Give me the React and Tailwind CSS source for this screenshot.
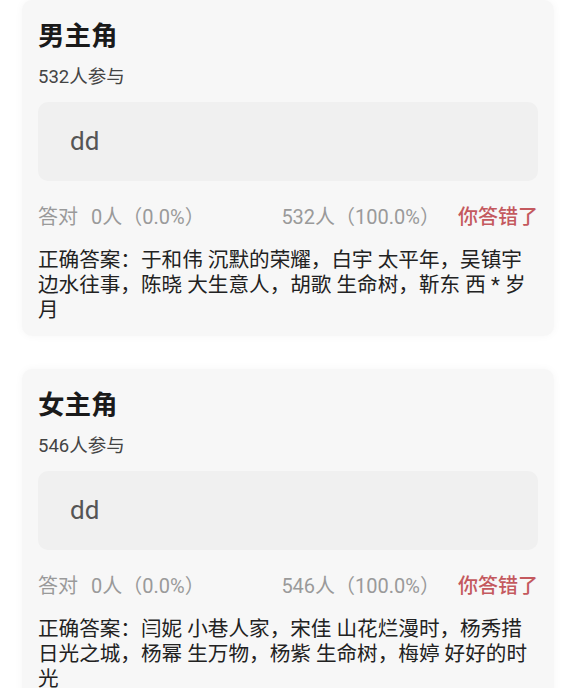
const questions = [
  {
    title: '男主角',
    joined: 532,
    answer: 'dd',
    rightCount: 0,
    rightPct: '0.0%',
    wrongCount: 532,
    wrongPct: '100.0%',
    correct: '于和伟 沉默的荣耀，白宇 太平年，吴镇宇边水往事，陈晓 大生意人，胡歌 生命树，靳东 西 * 岁月',
  },
  {
    title: '女主角',
    joined: 546,
    answer: 'dd',
    rightCount: 0,
    rightPct: '0.0%',
    wrongCount: 546,
    wrongPct: '100.0%',
    correct: '闫妮 小巷人家，宋佳 山花烂漫时，杨秀措日光之城，杨幂 生万物，杨紫 生命树，梅婷 好好的时光',
  },
]

function ResultCard({ q }) {
  return (
    <div className="rounded-[10px] bg-[#f7f7f7] px-4 pt-[18px] pb-[13px] shadow-[0_0_8px_rgba(0,0,0,0.04)]">
      <h2 className="text-[26.5px] leading-[36px] font-bold text-[#1a1a1a]">{q.title}</h2>
      <p className="mt-[11px] text-[18.5px] leading-[24px] text-[#444]">{q.joined}人参与</p>

      {/* user's answer */}
      <div className="mt-[13px] flex h-[79px] items-center rounded-[10px] bg-[#f0f0f0] pl-[32px]">
        <span className="text-[26px] text-[#555]">{q.answer}</span>
      </div>

      <div className="mt-[22px] flex items-center justify-between text-[20px] leading-[28px] text-[#9a9a9a]">
        <div className="flex items-center gap-[13px]">
          <span>答对</span>
          <span>{q.rightCount}人（{q.rightPct}）</span>
        </div>
        <div className="flex items-center gap-[18px]">
          <span>{q.wrongCount}人（{q.wrongPct}）</span>
          <span className="font-medium text-[#c4595e]">你答错了</span>
        </div>
      </div>

      <p className="mt-[17px] pr-1 text-[20.6px] leading-[25px] text-[#222]">
        正确答案：{q.correct}
      </p>
    </div>
  )
}

export default function App() {
  return (
    <div className="min-h-screen bg-white px-[22px] font-[Roboto,'Noto_Sans_CJK_SC',sans-serif]">
      <div className="flex flex-col gap-[33px] pb-6">
        {questions.map((q) => (
          <ResultCard key={q.title} q={q} />
        ))}
      </div>
    </div>
  )
}
